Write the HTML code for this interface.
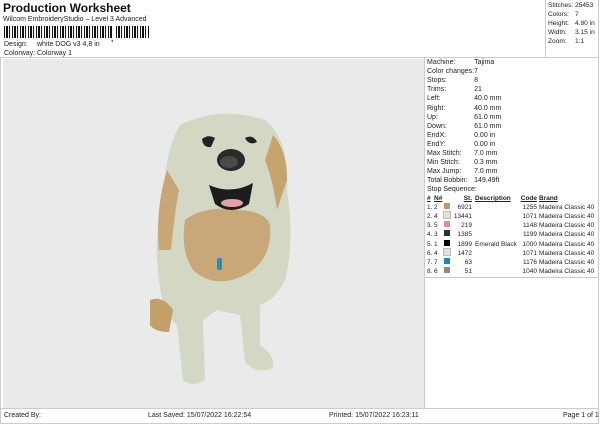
<!DOCTYPE html><html><head><style>
body{margin:0;width:600px;height:424px;background:#fff;font-family:"Liberation Sans",sans-serif;font-size:7px;color:#222;position:relative;overflow:hidden}
.a{position:absolute;white-space:nowrap}
table{border-collapse:collapse;font-size:7px}
td{padding:0;height:9.1px;line-height:9px}
.s td{font-size:6.5px}
</style></head><body>
<div class="a" style="left:3px;top:1px;font-size:12px;font-weight:bold;color:#111">Production Worksheet</div>
<div class="a" style="left:3px;top:16px">Wilcom EmbroideryStudio – Level 3 Advanced</div>
<div class="a" style="left:4px;top:26px;width:146px;height:12px;background:repeating-linear-gradient(90deg,#111 0 1px,#fff 1px 2px,#111 2px 4px,#fff 4px 5px,#111 5px 6px,#fff 6px 8px)"></div>
<div class="a" style="left:112px;top:26px;width:3px;height:12px;background:#fff"></div>
<div class="a" style="left:111px;top:34px;font-size:8px;font-weight:bold">,</div>
<div class="a" style="left:4px;top:41px">Design:</div><div class="a" style="left:37px;top:41px">white DOG v3 4,8 in</div>
<div class="a" style="left:4px;top:50px">Colorway:</div><div class="a" style="left:37px;top:50px">Colorway 1</div>
<div class="a" style="left:0;top:0;width:599px;height:58px;border:1px solid #ccc;border-top:none;border-left:none;box-sizing:border-box"></div>
<div class="a" style="left:545px;top:0;width:55px;height:58px;border-left:1px solid #ccc"></div>
<table class="a s" style="left:548px;top:1px"><tr><td style="width:27px;font-size:6.6px">Stitches:</td><td style="font-size:6.6px">25453</td></tr><tr><td style="font-size:6.6px">Colors:</td><td style="font-size:6.6px">7</td></tr><tr><td style="font-size:6.6px">Height:</td><td style="font-size:6.6px">4.80 in</td></tr><tr><td style="font-size:6.6px">Width:</td><td style="font-size:6.6px">3.15 in</td></tr><tr><td style="font-size:6.6px">Zoom:</td><td style="font-size:6.6px">1:1</td></tr></table>
<div class="a" style="left:3px;top:59px;width:421px;height:349px;background:#eaeaea"></div>
<div class="a" style="left:0;top:58px;width:599px;height:351px;border:1px solid #ccc;border-top:none;box-sizing:border-box"></div>
<div class="a" style="left:424px;top:58px;width:1px;height:351px;background:#ccc"></div>
<svg class="a" style="left:145px;top:100px" width="160" height="290" viewBox="0 0 160 290">
<path d="M35 25 Q75 5 120 20 Q145 40 142 90 Q150 140 140 180 Q130 200 115 205 L115 245 Q130 255 128 268 Q112 275 100 262 L95 215 L72 210 L58 220 L60 280 Q48 288 38 280 L32 225 Q18 215 14 180 Q8 140 18 100 Q20 50 35 25Z" fill="#d3d8c4"/>
<path d="M22 70 Q10 110 14 150 L26 150 Q30 110 34 90Z" fill="#c9a676"/>
<path d="M128 35 Q142 50 142 80 L132 110 Q128 80 120 60Z" fill="#c6a46e"/>
<path d="M40 120 Q60 105 90 110 Q120 110 125 125 Q128 160 100 175 Q70 190 48 170 Q35 150 40 120Z" fill="#c8a878"/>
<path d="M5 200 Q18 195 28 210 L24 232 Q10 232 5 225Z" fill="#c2a068"/>
<ellipse cx="86" cy="60" rx="14" ry="11" fill="#2a2a2a"/>
<ellipse cx="84" cy="62" rx="9" ry="6" fill="#4a4a4a"/>
<path d="M57 39 Q63 34 70 38 L66 47 Q58 48 57 39Z" fill="#222"/>
<path d="M100 38 Q108 34 112 42 Q104 46 100 38Z" fill="#222"/>
<path d="M64 85 Q86 95 108 83 L104 104 Q86 116 70 104Z" fill="#1c1c1c"/>
<ellipse cx="87" cy="103" rx="11" ry="4" fill="#e4a0a8"/>
<rect x="72" y="158" width="5" height="12" rx="2" fill="#1e8fc0"/>
</svg>
<table class="a" style="left:427px;top:58px"><tr><td style="width:47px">Machine:</td><td>Tajima</td></tr><tr><td>Color changes:</td><td>7</td></tr><tr><td>Stops:</td><td>8</td></tr><tr><td>Trims:</td><td>21</td></tr><tr><td>Left:</td><td>40.0 mm</td></tr><tr><td>Right:</td><td>40.0 mm</td></tr><tr><td>Up:</td><td>61.0 mm</td></tr><tr><td>Down:</td><td>61.0 mm</td></tr><tr><td>EndX:</td><td>0.00 in</td></tr><tr><td>EndY:</td><td>0.00 in</td></tr><tr><td>Max Stitch:</td><td>7.0 mm</td></tr><tr><td>Min Stitch:</td><td>0.3 mm</td></tr><tr><td>Max Jump:</td><td>7.0 mm</td></tr><tr><td>Total Bobbin:</td><td>149.49ft</td></tr><tr><td colspan="2">Stop Sequence:</td></tr></table>
<table class="a s" style="left:427px;top:194px;table-layout:fixed;width:170px">
<colgroup><col style="width:7px"><col style="width:10px"><col style="width:9px"><col style="width:19px"><col style="width:47px"><col style="width:18px"><col></colgroup>
<tr style="font-weight:bold;text-decoration:underline"><td>#</td><td>N#</td><td></td><td style="text-align:right">St.</td><td style="padding-left:3px">Description</td><td style="text-align:right">Code</td><td style="padding-left:2px">Brand</td></tr>
<tr><td>1.</td><td>2</td><td><i style="display:inline-block;width:6px;height:6px;background:#c8966a"></i></td><td align="right">6921</td><td></td><td align="right">1255</td><td style="padding-left:2px">Madeira Classic 40</td></tr>
<tr><td>2.</td><td>4</td><td><i style="display:inline-block;width:6px;height:6px;background:#e6e2d8;outline:1px solid #bbb"></i></td><td align="right">13441</td><td></td><td align="right">1071</td><td style="padding-left:2px">Madeira Classic 40</td></tr>
<tr><td>3.</td><td>5</td><td><i style="display:inline-block;width:6px;height:6px;background:#e08a9a"></i></td><td align="right">219</td><td></td><td align="right">1148</td><td style="padding-left:2px">Madeira Classic 40</td></tr>
<tr><td>4.</td><td>3</td><td><i style="display:inline-block;width:6px;height:6px;background:#2a3038"></i></td><td align="right">1385</td><td></td><td align="right">1199</td><td style="padding-left:2px">Madeira Classic 40</td></tr>
<tr><td>5.</td><td>1</td><td><i style="display:inline-block;width:6px;height:6px;background:#000"></i></td><td align="right">1899</td><td style="padding-left:3px">Emerald Black</td><td align="right">1000</td><td style="padding-left:2px">Madeira Classic 40</td></tr>
<tr><td>6.</td><td>4</td><td><i style="display:inline-block;width:6px;height:6px;background:#e6e2d8;outline:1px solid #bbb"></i></td><td align="right">1472</td><td></td><td align="right">1071</td><td style="padding-left:2px">Madeira Classic 40</td></tr>
<tr><td>7.</td><td>7</td><td><i style="display:inline-block;width:6px;height:6px;background:#1a8ac0"></i></td><td align="right">63</td><td></td><td align="right">1176</td><td style="padding-left:2px">Madeira Classic 40</td></tr>
<tr><td>8.</td><td>6</td><td><i style="display:inline-block;width:6px;height:6px;background:#8a8a8a"></i></td><td align="right">51</td><td></td><td align="right">1040</td><td style="padding-left:2px">Madeira Classic 40</td></tr>
</table>
<div class="a" style="left:425px;top:277px;width:174px;height:1px;background:#ccc"></div>
<div class="a" style="left:0;top:409px;width:599px;height:15px;border:1px solid #ccc;border-top:none;box-sizing:border-box"></div>
<div class="a" style="left:4px;top:412px">Created By:</div>
<div class="a" style="left:148px;top:412px">Last Saved: 15/07/2022 16:22:54</div>
<div class="a" style="left:329px;top:412px">Printed: 15/07/2022 16:23:11</div>
<div class="a" style="left:563px;top:412px">Page 1 of 1</div>
</body></html>
